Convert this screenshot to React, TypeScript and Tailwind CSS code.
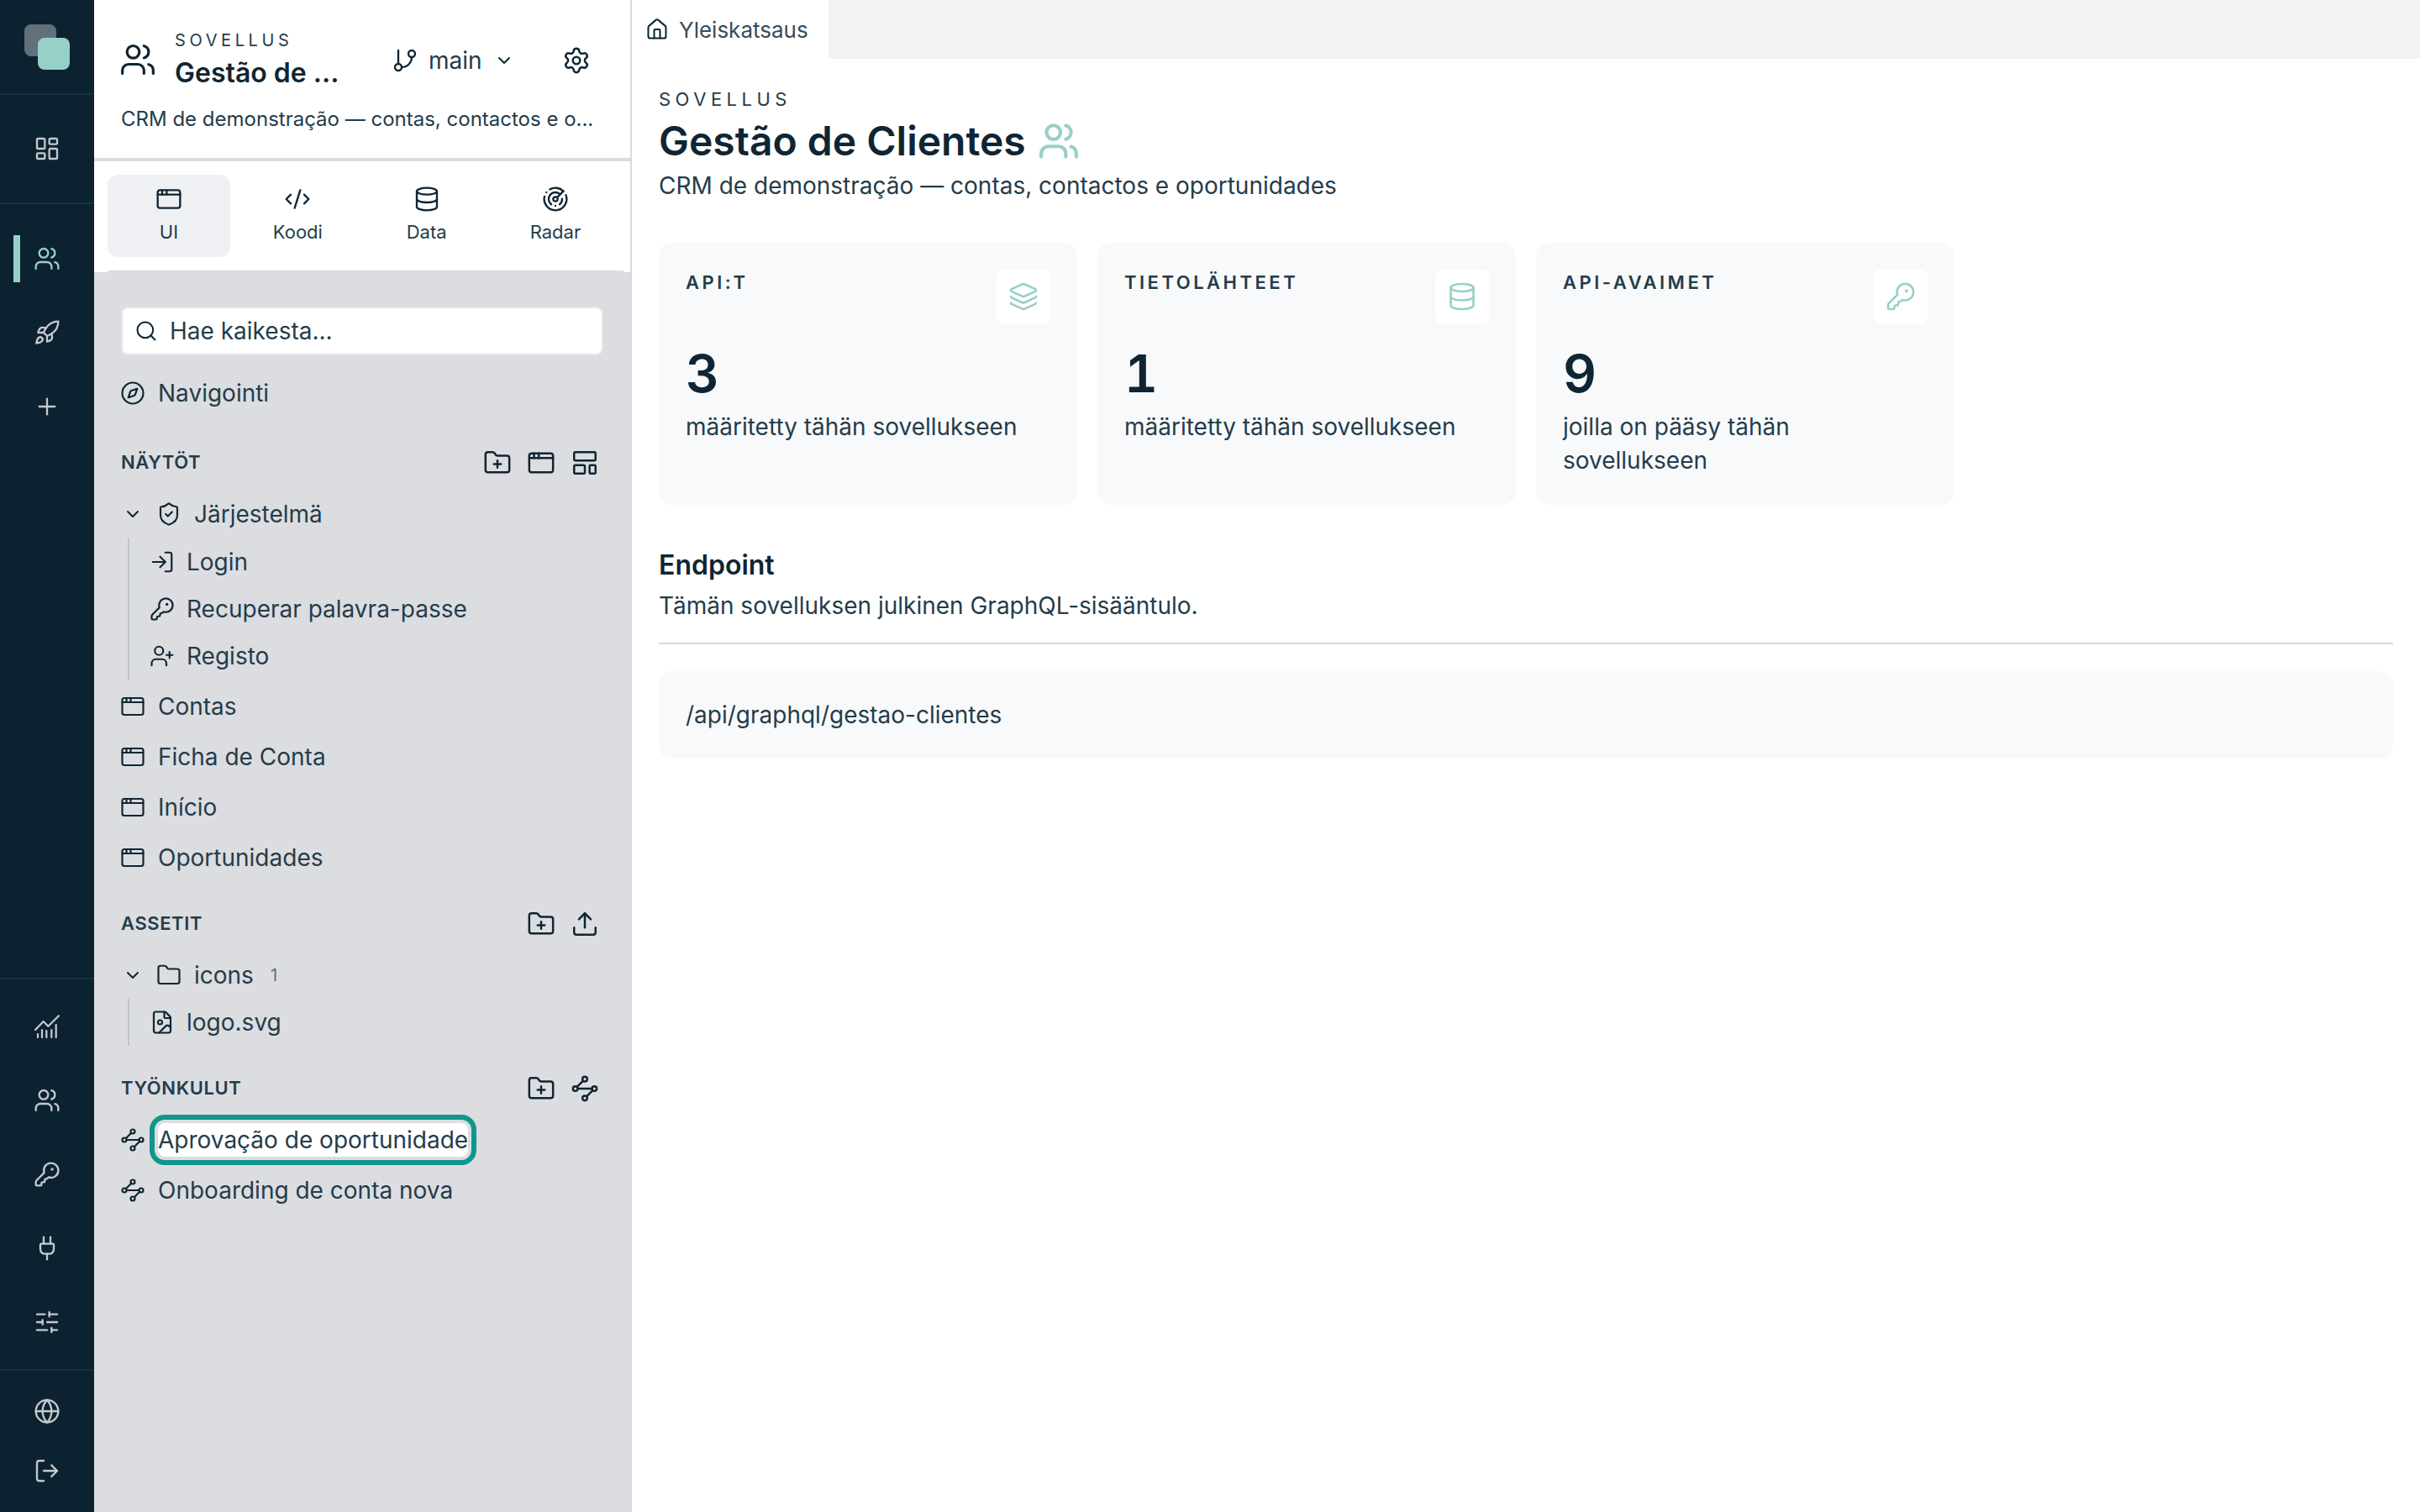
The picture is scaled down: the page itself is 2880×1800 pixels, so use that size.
import React from "react";
import {
  LayoutDashboard, Users, Rocket, Plus, KeyRound, Plug, SlidersHorizontal, Globe, LogOut,
  GitBranch, ChevronDown, Settings, AppWindow, CodeXml, Database, Radar, Search, Compass, FolderPlus, LayoutTemplate,
  ShieldCheck, LogIn, UserPlus, Folder, FileImage, Upload, House, Layers,
} from "lucide-react";

const F = "font-['Inter',sans-serif]";

function Flow({ size = 24, strokeWidth = 2, className = "" }: { size?: number; strokeWidth?: number; className?: string }) {
  return (
    <svg width={size} height={size} viewBox="0 0 24 24" fill="none" stroke="currentColor" strokeWidth={strokeWidth} strokeLinecap="round" strokeLinejoin="round" className={className}>
      <path d="m10.586 5.414-5.172 5.172" />
      <path d="m18.586 13.414-5.172 5.172" />
      <path d="M6 12h12" />
      <circle cx="12" cy="20" r="2" />
      <circle cx="12" cy="4" r="2" />
      <circle cx="20" cy="12" r="2" />
      <circle cx="4" cy="12" r="2" />
    </svg>
  );
}

function ChartBars({ size = 32 }: { size?: number }) {
  return (
    <svg width={size} height={size} viewBox="0 0 32 32" fill="none" stroke="currentColor" strokeWidth={2.25} strokeLinecap="round" strokeLinejoin="round">
      <path d="M2 20 11.7 10l5.6 5.7L30 3.3" />
      <path d="M5 29v-4M10 29v-9M15.3 29v-8M21.3 29v-9M26.7 29V14" />
    </svg>
  );
}

function RailIcon({ Icon, active }: { Icon: any; active?: boolean }) {
  return (
    <div className="relative flex h-[88px] w-full items-center justify-center text-[#c4c9cd]">
      {active && <div className="absolute left-[16px] top-[16px] h-[56px] w-[8px] bg-[#97d0c7]" />}
      <Icon size={32} strokeWidth={1.75} className={active ? "text-[#97d0c7]" : ""} />
    </div>
  );
}

function Tab({ Icon, label, active }: { Icon: any; label: string; active?: boolean }) {
  return (
    <div className={`flex h-[98px] w-[146px] flex-col items-center justify-center gap-[8px] rounded-[12px] pb-[3px] ${active ? "bg-[#eff0f4]" : ""}`}>
      <Icon size={32} strokeWidth={1.75} />
      <span className="text-[22px] leading-[30px] text-[#243c4a]">{label}</span>
    </div>
  );
}

function SectionHead({ title, icons }: { title: string; icons: any[] }) {
  return (
    <div className="flex h-[40px] items-center justify-between">
      <span className="text-[22px] font-semibold tracking-[0.6px] text-[#243c4a]">{title}</span>
      <div className="mr-[5px] mt-[2px] flex items-center gap-[18px]">
        {icons.map((I, i) => <I key={i} size={34} strokeWidth={1.75} />)}
      </div>
    </div>
  );
}

function Row({ Icon, label }: { Icon: any; label: string }) {
  return (
    <div className="flex h-[60px] items-center gap-[15px]">
      <Icon size={30} strokeWidth={1.75} className="-ml-[1px] shrink-0" />
      <span className="text-[28px] leading-[40px] text-[#243c4a]">{label}</span>
    </div>
  );
}

function TreeItem({ Icon, label }: { Icon: any; label: string }) {
  return (
    <div className="flex h-[56px] items-center gap-[14px]">
      <Icon size={30} strokeWidth={1.75} className="shrink-0" />
      <span className="text-[28px] leading-[40px] text-[#243c4a]">{label}</span>
    </div>
  );
}

function TreeHead({ Icon, label, count }: { Icon: any; label: string; count?: string }) {
  return (
    <div className="flex h-[56px] items-center">
      <ChevronDown size={24} strokeWidth={2} className="ml-[2px] mr-[16px] shrink-0" />
      <Icon size={30} strokeWidth={1.75} className="mr-[15px] shrink-0" />
      <span className="text-[28px] leading-[40px] text-[#243c4a]">{label}</span>
      {count && <span className="ml-[20px] text-[20px] text-[#5c6e79]">{count}</span>}
    </div>
  );
}

function Card({ label, Icon, value, text }: { label: string; Icon: any; value: string; text: string }) {
  return (
    <div className="flex h-[312px] w-[498px] flex-col rounded-[16px] bg-[#f8f9fb] px-[32px] pt-[32px]">
      <div className="flex items-start justify-between">
        <span className="text-[22px] font-semibold leading-[30px] tracking-[3.5px] text-[#243c4a]">{label}</span>
        <div className="flex h-[64px] w-[64px] items-center justify-center rounded-[8px] bg-white">
          <Icon size={36} strokeWidth={1.75} className="text-[#97d0c7]" />
        </div>
      </div>
      <div className="mt-[24px] text-[62px] font-semibold leading-[72px] tabular-nums text-[#0f2533]">{value}</div>
      <div className="mt-[7px] text-[28px] leading-[40px] text-[#243c4a]">{text}</div>
    </div>
  );
}

export default function App() {
  return (
    <div className={`${F} flex h-[1800px] w-[2880px] overflow-hidden bg-white text-[#0f2533]`}>
      <aside className="flex h-full w-[112px] shrink-0 flex-col bg-[#0c2230]">
        <div className="flex h-[113px] shrink-0 items-center justify-center border-b-[2px] border-[#173140]">
          <div className="relative h-[54px] w-[54px]">
            <div className="absolute left-0 top-0 h-[38px] w-[38px] rounded-[8px] bg-[#647079]" />
            <div className="absolute bottom-0 right-0 h-[38px] w-[38px] rounded-[8px] bg-[#97d0c7]" />
          </div>
        </div>
        <div className="flex h-[130px] shrink-0 items-center justify-center border-b-[2px] border-[#173140]">
          <RailIcon Icon={LayoutDashboard} />
        </div>
        <div className="flex flex-1 flex-col pt-[21px]">
          <RailIcon Icon={Users} active />
          <RailIcon Icon={Rocket} />
          <RailIcon Icon={Plus} />
        </div>
        <div className="flex h-[466px] shrink-0 flex-col border-t-[2px] border-[#173140] pt-[12px]">
          <RailIcon Icon={ChartBars} />
          <RailIcon Icon={Users} />
          <RailIcon Icon={KeyRound} />
          <RailIcon Icon={Plug} />
          <RailIcon Icon={SlidersHorizontal} />
        </div>
        <div className="flex h-[170px] shrink-0 flex-col items-center border-t-[2px] border-[#173140] pt-[6px]">
          <div className="flex h-[84px] items-center text-[#c4c9cd]"><Globe size={32} strokeWidth={1.75} /></div>
          <div className="flex h-[58px] items-center text-[#c4c9cd]"><LogOut size={32} strokeWidth={1.75} /></div>
        </div>
      </aside>

      <div className="flex h-full w-[640px] shrink-0 flex-col border-r-[2px] border-[#d5dae0] bg-[#dcdde1]">
        <div className="h-[192px] shrink-0 border-b-[4px] border-[#d8dce1] bg-white px-[32px]">
          <div className="flex h-[130px] items-center pt-[12px]">
            <Users size={44} strokeWidth={1.75} className="-ml-[2px] mr-[22px] shrink-0" />
            <div className="w-[230px]">
              <div className="text-[20px] leading-[28px] tracking-[4.6px] text-[#243c4a]">SOVELLUS</div>
              <div className="mt-[3px] text-[32px] font-semibold leading-[44px]">Gestão de ...</div>
            </div>
            <div className="ml-[28px] mt-[2px] flex items-center">
              <GitBranch size={32} strokeWidth={1.75} />
              <span className="ml-[12px] text-[28px] text-[#243c4a]">main</span>
              <ChevronDown size={24} strokeWidth={2} className="ml-[14px]" />
            </div>
            <Settings size={34} strokeWidth={1.75} className="ml-[57px] mt-[2px]" />
          </div>
          <div className="whitespace-nowrap text-[24px] leading-[24px] text-[#243c4a]">CRM de demonstração — contas, contactos e o...</div>
        </div>
        <div className="shrink-0 bg-white pl-[16px] pr-[8px]">
          <div className="flex h-[132px] items-start border-b-[2px] border-[#d8dce1] pt-[16px]">
            <div className="flex w-full justify-between pr-[8px]">
              <Tab Icon={AppWindow} label="UI" active />
              <Tab Icon={CodeXml} label="Koodi" />
              <Tab Icon={Database} label="Data" />
              <Tab Icon={Radar} label="Radar" />
            </div>
          </div>
        </div>

        <div className="flex-1 px-[32px] pt-[41px]">
          <div className="flex h-[58px] items-center rounded-[8px] border-[2px] border-[#e4e6ea] bg-white px-[14px]">
            <Search size={28} strokeWidth={1.75} />
            <span className="ml-[14px] text-[28px] text-[#243c4a]">Hae kaikesta...</span>
          </div>
          <div className="mt-[15px]"><Row Icon={Compass} label="Navigointi" /></div>

          <div className="mt-[32px]"><SectionHead title="NÄYTÖT" icons={[FolderPlus, AppWindow, LayoutTemplate]} /></div>
          <div className="mt-[14px]">
            <TreeHead Icon={ShieldCheck} label="Järjestelmä" />
            <div className="ml-[8px] border-l-[2px] border-[#bfc5cb] pl-[24px] pt-[1px]">
              <TreeItem Icon={LogIn} label="Login" />
              <TreeItem Icon={KeyRound} label="Recuperar palavra-passe" />
              <TreeItem Icon={UserPlus} label="Registo" />
            </div>
          </div>
          <div className="mt-[2px]">
            <Row Icon={AppWindow} label="Contas" />
            <Row Icon={AppWindow} label="Ficha de Conta" />
            <Row Icon={AppWindow} label="Início" />
            <Row Icon={AppWindow} label="Oportunidades" />
          </div>

          <div className="mt-[28px]"><SectionHead title="ASSETIT" icons={[FolderPlus, Upload]} /></div>
          <div className="mt-[14px]">
            <TreeHead Icon={Folder} label="icons" count="1" />
            <div className="ml-[8px] border-l-[2px] border-[#bfc5cb] pl-[24px]">
              <TreeItem Icon={FileImage} label="logo.svg" />
            </div>
          </div>

          <div className="mt-[30px]"><SectionHead title="TYÖNKULUT" icons={[FolderPlus, Flow]} /></div>
          <div className="mt-[12px]">
            <div className="flex h-[60px] items-center gap-[15px]">
              <Flow size={30} strokeWidth={1.75} className="-ml-[1px] shrink-0" />
              <span className="rounded-[8px] bg-white text-[28px] leading-[40px] text-[#243c4a] shadow-[0_0_0_4px_#dcdde1,0_0_0_10px_#0f978a]">Aprovação de oportunidade</span>
            </div>
            <Row Icon={Flow} label="Onboarding de conta nova" />
          </div>
        </div>
      </div>

      <main className="flex min-w-0 flex-1 flex-col">
        <div className="flex h-[70px] shrink-0 bg-[#f2f2f2]">
          <div className="flex w-[234px] items-center gap-[12px] bg-white pl-[16px]">
            <House size={28} strokeWidth={1.75} />
            <span className="text-[26px] text-[#3a4c58]">Yleiskatsaus</span>
          </div>
        </div>
        <div className="px-[32px] pt-[32px]">
          <div className="text-[22px] leading-[32px] tracking-[5.5px] text-[#243c4a]">SOVELLUS</div>
          <div className="mt-[1px] flex h-[66px] items-center gap-[14px]">
            <h1 className="text-[48px] font-semibold leading-[66px]">Gestão de Clientes</h1>
            <Users size={50} strokeWidth={2} className="text-[#97d0c7]" />
          </div>
          <p className="text-[28px] leading-[40px] text-[#243c4a]">CRM de demonstração — contas, contactos e oportunidades</p>

          <div className="mt-[48px] flex gap-[24px]">
            <Card label="API:T" Icon={Layers} value="3" text="määritetty tähän sovellukseen" />
            <Card label="TIETOLÄHTEET" Icon={Database} value="1" text="määritetty tähän sovellukseen" />
            <Card label="API-AVAIMET" Icon={KeyRound} value="9" text="joilla on pääsy tähän sovellukseen" />
          </div>

          <h2 className="mt-[52px] text-[32px] font-semibold leading-[40px]">Endpoint</h2>
          <p className="mt-[8px] text-[28px] leading-[40px] text-[#243c4a]">Tämän sovelluksen julkinen GraphQL-sisääntulo.</p>
          <div className="mt-[24px] h-[2px] bg-[#d5dae0]" />
          <div className="mt-[32px] flex h-[104px] items-center rounded-[16px] bg-[#f8f9fb] px-[32px] text-[28px] text-[#243c4a]">/api/graphql/gestao-clientes</div>
        </div>
      </main>
    </div>
  );
}
